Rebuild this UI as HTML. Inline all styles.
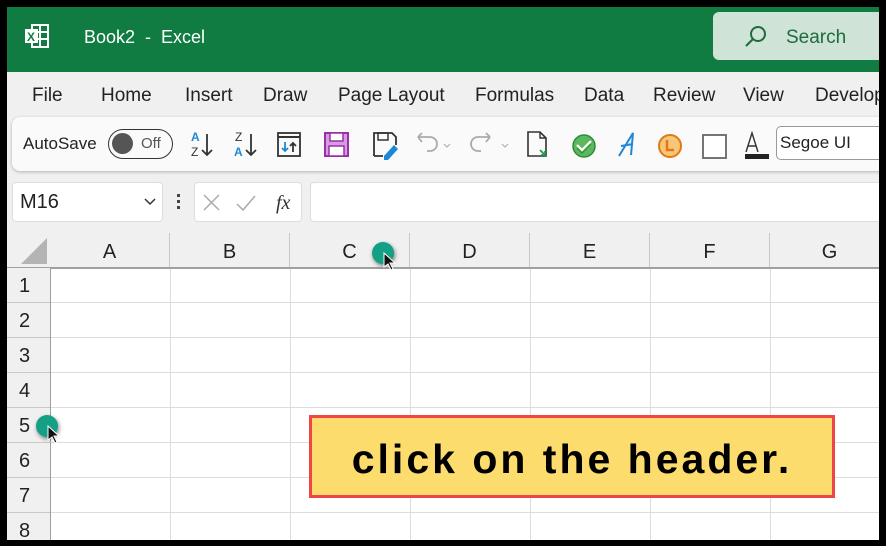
<!DOCTYPE html>
<html><head><meta charset="utf-8"><style>
*{margin:0;padding:0;box-sizing:border-box}
body{width:886px;height:546px;background:#000;position:relative;overflow:hidden;font-family:"Liberation Sans",sans-serif}
.abs{position:absolute}
#app{position:absolute;left:7px;top:7px;width:872px;height:533px;background:#f0f0f0;overflow:hidden}
#title{position:absolute;left:0;top:0;width:872px;height:65px;background:#107c41;color:#fff}
.tab{position:absolute;top:78px;font-size:19px;color:#222}
#tb{position:absolute;left:5px;top:110px;width:880px;height:54px;background:#fafafa;border-radius:8px;box-shadow:0 1px 3px rgba(0,0,0,.25)}
.hd{position:absolute;top:226px;height:35px;width:120px;border-right:1px solid #c8c8c8;text-align:center;font-size:20px;line-height:38px;color:#222}
.rw{position:absolute;left:0;width:43px;height:35px;border-bottom:1px solid #c8c8c8;font-size:20px;line-height:36px;padding-left:12px;color:#222}
</style></head><body>
<div id="app">
 <div id="title">
  <svg class="abs" style="left:17px;top:17px" width="26" height="24" viewBox="0 0 26 24"><rect x="8" y="1" width="16" height="22" fill="none" stroke="#fff" stroke-width="2"/><line x1="8" y1="8" x2="24" y2="8" stroke="#fff" stroke-width="2"/><line x1="8" y1="15" x2="24" y2="15" stroke="#fff" stroke-width="2"/><line x1="16" y1="1" x2="16" y2="23" stroke="#fff" stroke-width="2"/><rect x="1" y="5" width="13" height="14" fill="#fff"/><text x="3" y="17" font-size="12" font-weight="bold" fill="#107c41" font-family="Liberation Sans">X</text></svg>
  <div class="abs" style="left:77px;top:20px;font-size:18px">Book2&nbsp; - &nbsp;Excel</div>
  <div class="abs" style="left:706px;top:5px;width:180px;height:48px;background:#cfe3d6;border-radius:6px"></div>
  <svg class="abs" style="left:737px;top:18px" width="24" height="24" viewBox="0 0 24 24"><circle cx="14" cy="9" r="7" fill="none" stroke="#1e6b3e" stroke-width="2"/><line x1="9" y1="14" x2="2" y2="21" stroke="#1e6b3e" stroke-width="2"/></svg>
  <div class="abs" style="left:779px;top:20px;font-size:19px;color:#1e6b3e">Search</div>
 </div>
 <div class="tab" style="left:25px">File</div>
 <div class="tab" style="left:94px">Home</div>
 <div class="tab" style="left:178px">Insert</div>
 <div class="tab" style="left:256px">Draw</div>
 <div class="tab" style="left:331px">Page Layout</div>
 <div class="tab" style="left:468px">Formulas</div>
 <div class="tab" style="left:577px">Data</div>
 <div class="tab" style="left:646px">Review</div>
 <div class="tab" style="left:736px">View</div>
 <div class="tab" style="left:808px">Developer</div>
 <div id="tb">
  <div class="abs" style="left:11px;top:17px;font-size:17px;color:#222">AutoSave</div>
  <div class="abs" style="left:96px;top:12px;width:65px;height:30px;border:1.5px solid #333;border-radius:15px"><div class="abs" style="left:3px;top:3px;width:21px;height:21px;border-radius:50%;background:#555"></div><div class="abs" style="left:32px;top:5px;font-size:15px;color:#555">Off</div></div>
  <svg class="abs" style="left:176px;top:11px" width="340" height="34" viewBox="0 0 340 34">
   <g font-family="Liberation Sans" font-size="12">
    <text x="3" y="13" fill="#1e88d6" font-weight="bold">A</text><text x="3" y="28" fill="#333">Z</text>
    <path d="M19 6v21m-5-5 5 5 5-5" stroke="#333" stroke-width="1.8" fill="none"/>
    <text x="47" y="13" fill="#333">Z</text><text x="46" y="28" fill="#1e88d6" font-weight="bold">A</text>
    <path d="M63 6v21m-5-5 5 5 5-5" stroke="#333" stroke-width="1.8" fill="none"/>
   </g>
   <rect x="90" y="5" width="22" height="23" fill="none" stroke="#333" stroke-width="1.8"/><line x1="90" y1="9" x2="112" y2="9" stroke="#333" stroke-width="2"/>
   <path d="M97 14v9m-3-3 3 3 3-3" stroke="#1e88d6" stroke-width="1.8" fill="none"/><path d="M105 24v-9m-3 3 3-3 3 3" stroke="#333" stroke-width="1.8" fill="none"/>
   <rect x="137" y="5" width="23" height="23" fill="#d69be0" stroke="#9a2fa8" stroke-width="2"/><rect x="142" y="5" width="13" height="8" fill="#fff" stroke="#9a2fa8" stroke-width="1.5"/><rect x="141" y="18" width="15" height="10" fill="#fff" stroke="#9a2fa8" stroke-width="1.5"/>
   <path d="M186 28V5h18l4 4v8M186 28h9" stroke="#333" stroke-width="1.8" fill="none"/><rect x="190" y="5" width="10" height="7" fill="none" stroke="#333" stroke-width="1.5"/>
   <path d="M196 28l10-11 4 4-10 11h-4z" fill="#1e88d6"/>
   <path d="M234 9h12a7 7 0 0 1 0 14h-3M234 9l4-4M234 9l4 5" stroke="#aaa" stroke-width="1.8" fill="none" transform="translate(-4 0)"/>
   <path d="M256 16l3 3 3-3" stroke="#aaa" fill="none"/>
   <path d="M302 9h-12a7 7 0 0 0 0 14h3M302 9l-4-4M302 9l-4 5" stroke="#aaa" stroke-width="1.8" fill="none"/>
   <path d="M314 16l3 3 3-3" stroke="#aaa" fill="none"/>
  </svg>
  <svg class="abs" style="left:514px;top:11px" width="250" height="34" viewBox="0 0 250 34">
   <path d="M2 4h12l6 6v18H2z" fill="none" stroke="#333" stroke-width="1.6"/><path d="M14 4v6h6" fill="none" stroke="#333" stroke-width="1.4"/><path d="M14 22l5 5m0-4v4h-4" stroke="#1f9e4a" stroke-width="1.8" fill="none"/>
   <circle cx="58" cy="18" r="11" fill="#5cb85c" stroke="#2e8b3e" stroke-width="1.5"/><path d="M51 17l5 5 9-9" stroke="#fff" stroke-width="2.2" fill="none"/><path d="M51 20l5 5 9-9" stroke="#2e8b3e" stroke-width="1.2" fill="none"/>
   <path d="M93 28L107 5l-2 22M95 18l12-2" stroke="#1e88d6" stroke-width="2" fill="none"/>
   <circle cx="144" cy="18" r="11" fill="#f8c67a" stroke="#e07a10" stroke-width="2"/><path d="M141 12v10h7" stroke="#e07a10" stroke-width="2.5" fill="none"/>
   <rect x="177" y="7" width="23" height="23" fill="#fff" stroke="#666" stroke-width="1.8"/>
   <path d="M220 24l6-19 6 19M222 18h8" stroke="#333" stroke-width="1.4" fill="none"/><rect x="219" y="26" width="24" height="5" fill="#222"/>
  </svg>
  <div class="abs" style="left:764px;top:9px;width:120px;height:34px;border:1px solid #999;border-radius:5px;background:#fff;font-size:17px;padding:6px 3px;color:#222">Segoe UI</div>
 </div>
 <div class="abs" style="left:5px;top:175px;width:151px;height:40px;background:#fff;border:1px solid #ddd;border-radius:4px;font-size:20px;padding:8px 7px;color:#222">M16</div>
 <svg class="abs" style="left:137px;top:191px" width="12" height="8"><path d="M1 1l5 5 5-5" stroke="#333" stroke-width="1.5" fill="none"/></svg>
 <div class="abs" style="left:170px;top:187px;width:3px;height:3px;background:#444;box-shadow:0 6px #444,0 12px #444"></div>
 <div class="abs" style="left:187px;top:175px;width:108px;height:40px;background:#fff;border:1px solid #ddd;border-radius:4px"></div>
 <svg class="abs" style="left:195px;top:185px" width="100" height="22"><path d="M2 3l15 15M17 3L2 18" stroke="#aaa" stroke-width="1.5"/><path d="M35 12l6 6 12-14" stroke="#aaa" stroke-width="1.5" fill="none"/><text x="74" y="17" font-family="Liberation Serif" font-style="italic" font-size="20" fill="#333">fx</text></svg>
 <div class="abs" style="left:303px;top:175px;width:600px;height:40px;background:#fff;border:1px solid #ddd;border-radius:4px"></div>
 <div class="abs" style="left:0;top:261px;width:872px;height:300px;background:#fff;
  background-image:linear-gradient(90deg,#dcdcdc 1px,transparent 1px),linear-gradient(#dcdcdc 1px,transparent 1px);
  background-size:120px 35px;background-position:43px 0,0 34px"></div>
 <div class="abs" style="left:0;top:226px;width:43px;height:35px;background:#f0f0f0"></div>
 <svg class="abs" style="left:13px;top:230px" width="28" height="28"><path d="M27 1v26H1z" fill="#b4b4b4"/></svg>
 <div class="hd" style="left:43px">A</div><div class="hd" style="left:163px">B</div><div class="hd" style="left:283px">C</div><div class="hd" style="left:403px">D</div><div class="hd" style="left:523px">E</div><div class="hd" style="left:643px">F</div><div class="hd" style="left:763px">G</div>
 <div class="abs" style="left:0;top:260px;width:872px;height:1.5px;background:#a0a0a0"></div>
 <div class="abs" style="left:0;top:261px;width:44px;height:280px;background:#f0f0f0;border-right:1.5px solid #a0a0a0"></div>
 <div class="rw" style="top:261px">1</div><div class="rw" style="top:296px">2</div><div class="rw" style="top:331px">3</div><div class="rw" style="top:366px">4</div><div class="rw" style="top:401px">5</div><div class="rw" style="top:436px">6</div><div class="rw" style="top:471px">7</div><div class="rw" style="top:506px">8</div>
 <div class="abs" style="left:365px;top:235px;width:22px;height:22px;border-radius:50%;background:#13a085;box-shadow:1px 2px 4px rgba(0,0,0,.5)"></div>
 <svg class="abs" style="left:376px;top:245px" width="14" height="20"><path d="M1 1v14l4-3 3 6 2-1-3-6h5z" fill="#111" stroke="#fff" stroke-width="1"/></svg>
 <div class="abs" style="left:29px;top:408px;width:22px;height:22px;border-radius:50%;background:#13a085;box-shadow:1px 2px 4px rgba(0,0,0,.5)"></div>
 <svg class="abs" style="left:40px;top:418px" width="14" height="20"><path d="M1 1v14l4-3 3 6 2-1-3-6h5z" fill="#111" stroke="#fff" stroke-width="1"/></svg>
 <div class="abs" style="left:302px;top:408px;width:526px;height:83px;background:#fddc6e;border:3px solid #f04545;text-align:center;font-size:41px;font-weight:bold;line-height:82px;letter-spacing:3px;color:#000">click on the header.</div>
</div>
</body></html>
